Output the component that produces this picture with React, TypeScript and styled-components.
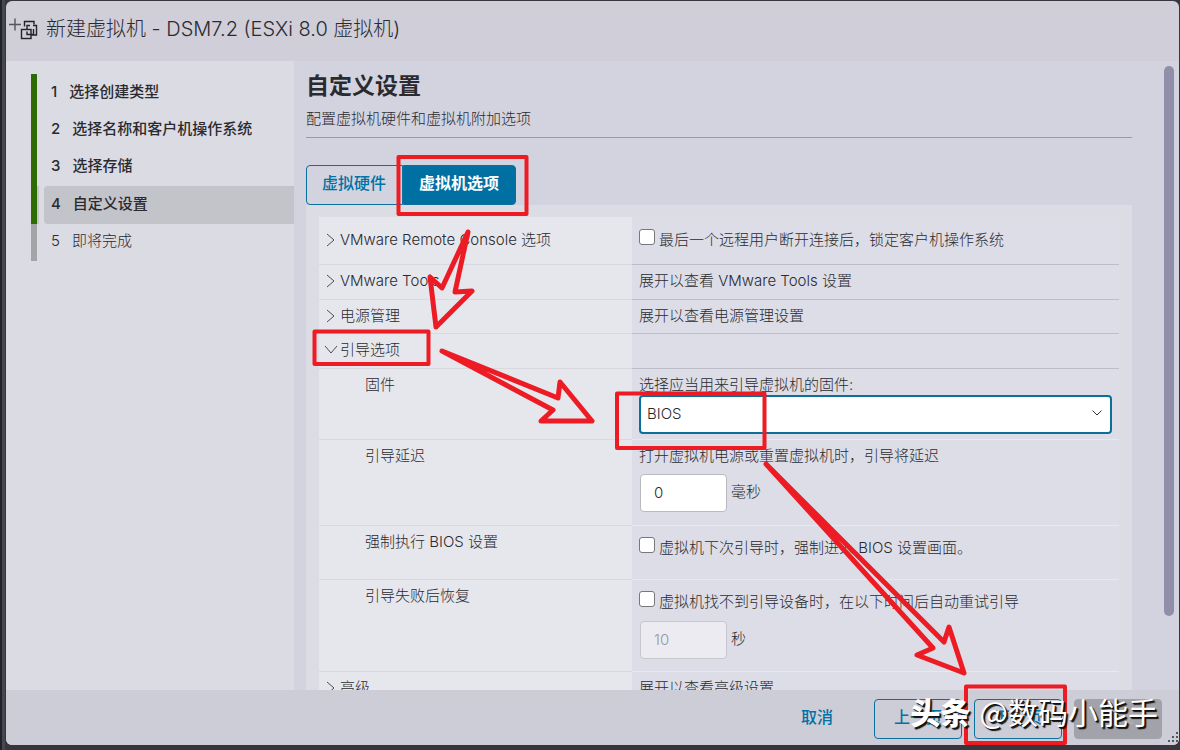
import React from 'react';
import styled, { createGlobalStyle, css } from 'styled-components';

const Global = createGlobalStyle`
  * { box-sizing: border-box; }
  html, body { margin: 0; height: 100%; overflow: hidden; }
  body {
    font-family: Inter, 'Noto Sans CJK SC', sans-serif;
    font-size: 15px;
    line-height: 20px;
    font-weight: 300;
    color: #2a2a2f;
    background: #36363c;
  }
  button, input, select { font: inherit; color: inherit; }
`;

const Page = styled.div`
  position: relative;
  display: flex;
  height: 100vh;
  padding: 1px 1px 5px 6px;
  background: linear-gradient(90deg, #1f2229 0 2px, #46474e 2px 5px, #36363c 5px);
`;

const Dialog = styled.div`
  flex: 1;
  display: flex;
  flex-direction: column;
  min-width: 0;
  border-radius: 6px;
  overflow: hidden;
  background: #cfced9;
`;

const Header = styled.header`
  flex: none;
  display: flex;
  align-items: center;
  gap: 8px;
  height: 60px;
  padding: 0 0 4px 2px;
`;

const HeaderTitle = styled.h1`
  margin: 0;
  font-size: 20px;
  line-height: 28px;
  font-weight: 300;
`;

const Body = styled.div`
  flex: 1;
  display: flex;
  min-height: 0;
`;

const Sidebar = styled.nav`
  flex: none;
  width: 288px;
  padding: 13px 0 0 25px;
  background: #dbdbe4;
`;

const Steps = styled.ol`
  display: grid;
  grid-auto-rows: 1fr;
  height: 187px;
  margin: 0;
  padding: 0;
  list-style: none;
`;

const Step = styled.li<{ $state: 'done' | 'current' | 'todo' }>`
  display: flex;
  border-left: 6px solid ${p => (p.$state === 'todo' ? '#a3a3a8' : '#2f6b03')};
  font-weight: ${p => (p.$state === 'todo' ? 300 : 500)};
  box-shadow: ${p => (p.$state === 'current' ? 'inset 2px 0 #c4c5ca' : 'none')};
`;

const StepButton = styled.button<{ $current?: boolean }>`
  flex: 1;
  display: flex;
  align-items: center;
  gap: 12px;
  margin-left: 7px;
  padding: 0 7px 2px;
  border: 0;
  border-radius: 4px 0 0 4px;
  text-align: left;
  background: ${p => (p.$current ? '#c3c4ca' : 'transparent')};
`;

const Main = styled.main`
  flex: 1;
  display: flex;
  min-width: 0;
  padding-left: 12px;
  background: #d3d3df;
`;

const Content = styled.div`
  flex: 1;
  display: flex;
  flex-direction: column;
  min-width: 0;
  overflow: hidden;
`;

const SectionTitle = styled.h2`
  margin: 9px 0 0;
  font-size: 23px;
  line-height: 32px;
  font-weight: 700;
`;

const Subtitle = styled.p`
  margin: 0;
  padding: 6px 0 8px;
  border-bottom: 1px solid #9a9aaa;
  line-height: 21px;
`;

const Tabs = styled.div`
  flex: none;
  display: flex;
  height: 40px;
  margin-top: 27px;
`;

const blueButton = css`
  border: 1px solid #0b709e;
  color: #0072a3;
  background: transparent;
  font-size: 16px;
  font-weight: 500;
`;

const Tab = styled.button<{ $active?: boolean }>`
  ${blueButton}
  padding: 0 16px 4px 15px;
  border-radius: ${p => (p.$active ? '0 4px 4px 0' : '4px 0 0 4px')};
  ${p => p.$active && css`
    padding: 0 16px 4px 15px;
    background: #0070a3;
    color: #fff;
    font-weight: 700;
  `}
`;

const Panel = styled.div`
  flex: 1;
  min-height: 0;
  padding: 12px 13px 0;
  overflow: hidden;
  background: #dcdce5;
`;

const Options = styled.table`
  width: 100%;
  border-collapse: separate;
  border-spacing: 0;
  table-layout: fixed;
`;

const Row = styled.tr<{ $h: number; $sub?: boolean }>`
  height: ${p => p.$h}px;
  > th, > td {
    padding: ${p => (p.$sub ? '6px 7px 0' : '0 7px 2px')};
    vertical-align: ${p => (p.$sub ? 'top' : 'middle')};
  }
  > th {
    width: 313px;
    padding-left: ${p => (p.$sub ? 46 : 7)}px;
    border-bottom: 1px solid #d9d9df;
    background: #e6e6ed;
    font-weight: 300;
    text-align: left;
  }
  > td {
    border-bottom: 1px solid ${p => (p.$sub ? '#e8e8ee' : '#bdbdc7')};
    background: #dcdde6;
  }
`;

const Toggle = styled.button`
  display: flex;
  align-items: center;
  gap: 4px;
  padding: 0;
  border: 0;
  background: transparent;
  font-weight: 300;
`;

const Chevron = styled.svg<{ $open?: boolean }>`
  width: 10px;
  height: 14px;
  fill: none;
  stroke: #4d4d54;
  overflow: visible;
  transform: ${p => (p.$open ? 'rotate(90deg)' : 'none')};
`;

const Check = styled.label<{ $sub?: boolean }>`
  display: flex;
  align-items: flex-start;
  gap: 4px;
  padding-top: ${p => (p.$sub ? 5 : 0)}px;
  line-height: 22px;
  input {
    appearance: none;
    flex: none;
    width: 16px;
    height: 16px;
    margin: 0;
    border: 1px solid #77777c;
    border-radius: 3px;
    background: #fff;
  }
`;

const FieldLabel = styled.label`
  display: block;
`;

const SelectBox = styled.div`
  position: relative;
  select {
    appearance: none;
    display: block;
    width: 100%;
    height: 39px;
    padding: 0 6px 2px;
    border: 2px solid #0b6f9a;
    border-radius: 4px;
    background: #fff;
    font-weight: 300;
  }
  svg {
    position: absolute;
    right: 10px;
    top: 14px;
    fill: none;
    stroke: #333;
  }
`;

const NumberField = styled.div`
  display: flex;
  align-items: center;
  gap: 4px;
  margin-top: 8px;
  padding-left: 1px;
  input {
    width: 87px;
    height: 38px;
    padding: 0 13px 2px;
    border: 1px solid #b9b9c0;
    border-radius: 4px;
    background: #fff;
    font-weight: 300;
  }
  input:disabled {
    border-color: #c6c6cd;
    color: #98989e;
    background: #ebebf1;
  }
  span { padding-bottom: 2px; }
`;

const ScrollTrack = styled.div`
  flex: none;
  width: 47px;
  padding: 5px 5px 0 32px;
`;

const ScrollThumb = styled.div`
  height: calc(100% - 74px);
  border-radius: 5px;
  background: #8f8fa9;
`;

const Footer = styled.footer`
  position: relative;
  flex: none;
  display: flex;
  justify-content: flex-end;
  gap: 12px;
  height: 55px;
  padding: 9px 17px 6px;
  background: #cdcdd8;
`;

const FooterButton = styled.button<{ $link?: boolean }>`
  ${blueButton}
  width: 88px;
  padding: 0 0 4px;
  border-radius: 4px;
  ${p => p.$link && css`
    width: 90px;
    border-color: transparent;
  `}
  &:disabled {
    border-color: #a2a2aa;
    background: #a2a2aa;
    color: #b0b0b8;
  }
`;

const Grip = styled.svg`
  position: absolute;
  right: 1px;
  bottom: 3px;
  fill: #55555c;
`;

const Markup = styled.svg`
  position: absolute;
  left: 0;
  top: 0;
  pointer-events: none;
  fill: none;
  stroke: #ed1c24;
  stroke-width: 5;
  stroke-linejoin: round;
`;

const Watermark = styled.div`
  position: absolute;
  right: 22px;
  bottom: 19px;
  display: flex;
  align-items: center;
  gap: 9px;
  font-family: 'Noto Sans CJK SC', sans-serif;
  font-size: 30px;
  line-height: 40px;
  font-weight: 400;
  color: #fff;
  text-shadow: 1px 1px #111, 2px 2px 1px #111;
  pointer-events: none;
  strong { font-weight: 900; }
`;

const Arrow = ({ open }: { open?: boolean }) => (
  <Chevron viewBox="0 0 10 14" $open={open} aria-hidden>
    <path d="M1 1l7 6-7 6" />
  </Chevron>
);

const steps = ['选择创建类型', '选择名称和客户机操作系统', '选择存储', '自定义设置', '即将完成'];

export default function App() {
  return (
    <Page>
      <Global />
      <Dialog role="dialog" aria-labelledby="wizard-title">
        <Header>
          <svg width="30" height="24" viewBox="0 0 30 24" fill="none" stroke="#222228" strokeWidth="1.4" aria-hidden>
            <path d="M1 7.500h12M7 1.500v12" stroke="#55555c" />
            <rect x="13.500" y="12.500" width="9.500" height="9" />
            <path d="M16.500 9.500V4.500h9.500v3" />
            <path d="M25 8.500h3.500v9.500h-5M19 12v-3.500h3M19 14.500v3h6.500v-5.500" />
          </svg>
          <HeaderTitle id="wizard-title">新建虚拟机 - DSM7.2 (ESXi 8.0 虚拟机)</HeaderTitle>
        </Header>
        <Body>
          <Sidebar>
            <Steps>
              {steps.map((name, i) => (
                <Step key={name} $state={i < 3 ? 'done' : i === 3 ? 'current' : 'todo'}>
                  <StepButton $current={i === 3}>
                    <span>{i + 1}</span>
                    <span>{name}</span>
                  </StepButton>
                </Step>
              ))}
            </Steps>
          </Sidebar>
          <Main>
            <Content>
              <SectionTitle>自定义设置</SectionTitle>
              <Subtitle>配置虚拟机硬件和虚拟机附加选项</Subtitle>
              <Tabs role="tablist">
                <Tab role="tab">虚拟硬件</Tab>
                <Tab role="tab" aria-selected $active>虚拟机选项</Tab>
              </Tabs>
              <Panel>
                <Options>
                  <tbody>
                    <Row $h={48}>
                      <th scope="row"><Toggle><Arrow />VMware Remote Console 选项</Toggle></th>
                      <td><Check><input type="checkbox" />最后一个远程用户断开连接后，锁定客户机操作系统</Check></td>
                    </Row>
                    <Row $h={35}>
                      <th scope="row"><Toggle><Arrow />VMware Tools</Toggle></th>
                      <td>展开以查看 VMware Tools 设置</td>
                    </Row>
                    <Row $h={34}>
                      <th scope="row"><Toggle><Arrow />电源管理</Toggle></th>
                      <td>展开以查看电源管理设置</td>
                    </Row>
                    <Row $h={35}>
                      <th scope="row"><Toggle aria-expanded><Arrow open />引导选项</Toggle></th>
                      <td />
                    </Row>
                    <Row $h={71} $sub>
                      <th scope="row">固件</th>
                      <td>
                        <FieldLabel htmlFor="firmware">选择应当用来引导虚拟机的固件:</FieldLabel>
                        <SelectBox>
                          <select id="firmware" defaultValue="BIOS">
                            <option>BIOS</option>
                            <option>EFI</option>
                          </select>
                          <svg width="10" height="8" viewBox="0 0 10 8" aria-hidden><path d="M0.500 1.500l4.500 4.500 4.500-4.500" /></svg>
                        </SelectBox>
                      </td>
                    </Row>
                    <Row $h={86} $sub>
                      <th scope="row">引导延迟</th>
                      <td>
                        <FieldLabel htmlFor="delay">打开虚拟机电源或重置虚拟机时，引导将延迟</FieldLabel>
                        <NumberField><input id="delay" defaultValue="0" /><span>毫秒</span></NumberField>
                      </td>
                    </Row>
                    <Row $h={54} $sub>
                      <th scope="row">强制执行 BIOS 设置</th>
                      <td><Check $sub><input type="checkbox" />虚拟机下次引导时，强制进入 BIOS 设置画面。</Check></td>
                    </Row>
                    <Row $h={92} $sub>
                      <th scope="row">引导失败后恢复</th>
                      <td>
                        <Check $sub><input type="checkbox" />虚拟机找不到引导设备时，在以下时间后自动重试引导</Check>
                        <NumberField><input aria-label="重试延迟" defaultValue="10" disabled /><span>秒</span></NumberField>
                      </td>
                    </Row>
                    <Row $h={35}>
                      <th scope="row"><Toggle><Arrow />高级</Toggle></th>
                      <td>展开以查看高级设置</td>
                    </Row>
                  </tbody>
                </Options>
              </Panel>
            </Content>
            <ScrollTrack><ScrollThumb /></ScrollTrack>
          </Main>
        </Body>
        <Footer>
          <FooterButton $link>取消</FooterButton>
          <FooterButton>上一页</FooterButton>
          <FooterButton>下一页</FooterButton>
          <FooterButton disabled>完成</FooterButton>
          <Grip width="10" height="10" viewBox="0 0 10 10" aria-hidden>
            <path d="M8 0h2v2H8zM4 4h2v2H4zM8 4h2v2H8zM0 8h2v2H0zM4 8h2v2H4zM8 8h2v2H8z" />
          </Grip>
        </Footer>
      </Dialog>
      <Markup width="1180" height="750" viewBox="0 0 1180 750" aria-hidden>
        <g strokeWidth="4">
          <rect x="398.500" y="157" width="128" height="57" />
          <rect x="314.500" y="331.500" width="114" height="32.500" />
          <rect x="617" y="393.500" width="147.500" height="54.500" />
          <rect x="966" y="686.500" width="99" height="56.500" />
        </g>
        <path d="M468 232L442 288L430 277L436 327L472 291L455 292Z" />
        <path d="M442 351L558 398L560 382L592 421L541 421L553 410Z" />
        <path d="M766 464L944 642L949 627L964 673L917 655L933 648Z" />
      </Markup>
      <Watermark><strong>头条</strong><span>@数码小能手</span></Watermark>
    </Page>
  );
}
